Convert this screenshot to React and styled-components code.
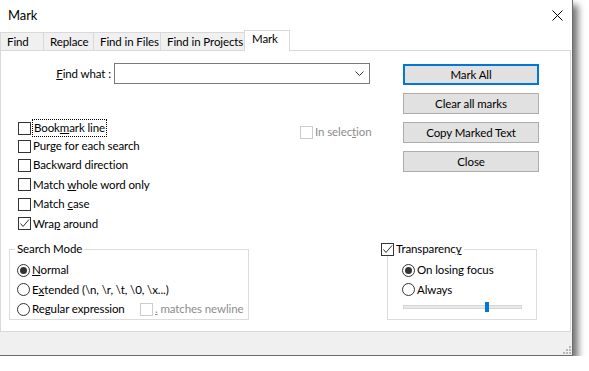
import React from "react";
import styled, { createGlobalStyle } from "styled-components";

const GlobalStyle = createGlobalStyle`
  body {
    margin: 0;
    background: #fff;
    font-family: Lato, "Liberation Sans", sans-serif;
    font-size: 11.5px;
    letter-spacing: -0.1px;
    color: #000;
  }
  u {
    text-underline-offset: 1px;
  }
`;

const Window = styled.div`
  width: 573px;
  height: 356px;
  box-sizing: border-box;
  background: #fff;
  border-right: 1px solid #6b6b6b;
  border-bottom: 1px solid #6b6b6b;
  box-shadow: 5px 5px 7px rgba(0, 0, 0, 0.55);
  display: flex;
  flex-direction: column;
`;

const TitleBar = styled.div`
  height: 30px;
  display: flex;
  align-items: center;
  justify-content: space-between;
  padding: 0 9px 0 8px;
  font-size: 13px;
  flex: none;
`;

const TabStrip = styled.div`
  height: 20px;
  display: flex;
  align-items: flex-end;
  flex: none;
`;

const Tab = styled.div`
  box-sizing: border-box;
  width: ${(p) => p.$w}px;
  height: ${(p) => (p.$active ? 21 : 18)}px;
  margin-right: -1px;
  margin-bottom: ${(p) => (p.$active ? -1 : 0)}px;
  border: 1px solid #d9d9d9;
  border-bottom: none;
  background: ${(p) => (p.$active ? "#fff" : "#f0f0f0")};
  position: relative;
  z-index: ${(p) => (p.$active ? 1 : 0)};
  padding: ${(p) => (p.$active ? "1px 0 0 7px" : "2px 0 0 6px")};
  line-height: 14px;
  white-space: nowrap;
`;

const Panel = styled.div`
  box-sizing: border-box;
  width: 571px;
  height: 282px;
  border: 1px solid #d9d9d9;
  display: flex;
  flex-direction: column;
  flex: none;
`;

const TopArea = styled.div`
  display: flex;
`;

const LeftCol = styled.div`
  width: 390px;
  padding: 12px 0 0 17px;
  box-sizing: border-box;
`;

const FindRow = styled.div`
  display: flex;
  align-items: center;
  height: 21px;
`;

const FindLabel = styled.div`
  width: 96px;
  box-sizing: border-box;
  text-align: right;
  padding-right: 3px;
`;

const Combo = styled.div`
  box-sizing: border-box;
  width: 256px;
  height: 21px;
  border: 1px solid #7a7a7a;
  display: flex;
  align-items: center;
  justify-content: flex-end;
  padding-right: 5px;
`;

const CheckList = styled.div`
  margin-top: 33px;
  display: flex;
  flex-direction: column;
`;

const CheckRow = styled.div`
  height: 19.4px;
  display: grid;
  grid-template-columns: 282px auto;
  align-items: center;
`;

const Item = styled.div`
  display: flex;
  align-items: center;
  gap: 2px;
  color: ${(p) => (p.$disabled ? "#8d8d8d" : "#000")};
  margin-top: ${(p) => p.$drop || 0}px;
  white-space: nowrap;
  line-height: 14px;
`;

const Box = styled.span`
  box-sizing: border-box;
  width: 13px;
  height: 13px;
  border: 1px solid ${(p) => (p.$disabled ? "#cccccc" : "#333")};
  background: #fff;
  flex: none;
  display: flex;
  align-items: center;
  justify-content: center;
`;

const Circle = styled.span`
  box-sizing: border-box;
  width: 13px;
  height: 13px;
  border-radius: 50%;
  border: 1px solid #333;
  background: #fff;
  flex: none;
  display: flex;
  align-items: center;
  justify-content: center;
  &::after {
    content: "";
    display: ${(p) => (p.$checked ? "block" : "none")};
    width: 7px;
    height: 7px;
    border-radius: 50%;
    background: #333;
  }
`;

const Focus = styled.span`
  outline: 1px dotted #000;
  outline-offset: 0;
  padding: 1px 1px;
`;

const ButtonCol = styled.div`
  margin-left: 12px;
  padding-top: 13px;
  display: flex;
  flex-direction: column;
  gap: 8px;
`;

const Button = styled.div`
  box-sizing: border-box;
  width: 136px;
  height: 21px;
  background: #e1e1e1;
  border: ${(p) => (p.$default ? "2px solid #0078d7" : "1px solid #adadad")};
  display: flex;
  align-items: center;
  justify-content: center;
`;

const BottomRow = styled.div`
  margin-top: 9px;
  display: flex;
`;

const Group = styled.fieldset`
  box-sizing: border-box;
  margin: 0 0 0 ${(p) => p.$left}px;
  padding: 0;
  width: ${(p) => p.$w}px;
  height: 78px;
  min-inline-size: 0;
  border: 1px solid #dcdcdc;
`;

const Legend = styled.legend`
  padding: ${(p) => p.$pad};
  margin-left: ${(p) => p.$shift}px;
  line-height: 14px;
  height: 14px;
`;

const GroupBody = styled.div`
  padding: 4px 0 0 ${(p) => p.$inset}px;
  display: flex;
  flex-direction: column;
`;

const RadioRow = styled.div`
  height: 19.5px;
  display: flex;
  align-items: center;
`;

const SplitRow = styled(RadioRow)`
  display: grid;
  grid-template-columns: 123px auto;
`;

const SliderRow = styled.div`
  margin-top: 6px;
  padding-left: 1px;
`;

const Track = styled.div`
  position: relative;
  box-sizing: border-box;
  width: 119px;
  height: 4px;
  background: #e7eaea;
  border: 1px solid #d6d6d6;
`;

const Thumb = styled.div`
  position: absolute;
  left: 81px;
  top: -4px;
  width: 4px;
  height: 10px;
  background: #0078d7;
`;

const Footer = styled.div`
  flex: 1;
  background: #f0f0f0;
  display: flex;
  align-items: flex-end;
  justify-content: flex-end;
  padding: 0 1px 1px 0;
`;

function CloseIcon() {
  return (
    <svg width="11" height="11" viewBox="0 0 11 11">
      <path d="M0.5 0.5 L10.5 10.5 M10.5 0.5 L0.5 10.5" stroke="#000" strokeWidth="1" fill="none" />
    </svg>
  );
}

function Chevron() {
  return (
    <svg width="9" height="5" viewBox="0 0 9 5">
      <polyline points="0.5,0.5 4.5,4.5 8.5,0.5" stroke="#333" strokeWidth="1" fill="none" />
    </svg>
  );
}

function Tick() {
  return (
    <svg width="11" height="11" viewBox="0 0 11 11">
      <polyline points="1.5,5.5 4,8.5 10,1.5" stroke="#333" strokeWidth="1" fill="none" />
    </svg>
  );
}

function Grip() {
  const dots = [
    [6, 0],
    [3, 3],
    [6, 3],
    [0, 6],
    [3, 6],
    [6, 6],
  ];
  return (
    <svg width="8" height="8" viewBox="0 0 8 8">
      {dots.map(([x, y]) => (
        <rect key={`${x}-${y}`} x={x} y={y} width="2" height="2" fill="#b8b8b8" />
      ))}
    </svg>
  );
}

function Check({ checked, disabled, drop, children }) {
  return (
    <Item $disabled={disabled} $drop={drop}>
      <Box $disabled={disabled}>{checked && <Tick />}</Box>
      <span>{children}</span>
    </Item>
  );
}

function Radio({ checked, children }) {
  return (
    <Item>
      <Circle $checked={checked} />
      <span>{children}</span>
    </Item>
  );
}

const tabs = [
  { label: "Find", w: 44 },
  { label: "Replace", w: 51 },
  { label: "Find in Files", w: 68 },
  { label: "Find in Projects", w: 85 },
  { label: "Mark", w: 46, active: true },
];

export default function App() {
  return (
    <>
      <GlobalStyle />
      <Window>
        <TitleBar>
          <span>Mark</span>
          <CloseIcon />
        </TitleBar>
        <TabStrip>
          {tabs.map((t) => (
            <Tab key={t.label} $w={t.w} $active={t.active}>
              {t.label}
            </Tab>
          ))}
        </TabStrip>
        <Panel>
          <TopArea>
            <LeftCol>
              <FindRow>
                <FindLabel>
                  <u>F</u>ind what :
                </FindLabel>
                <Combo>
                  <Chevron />
                </Combo>
              </FindRow>
              <CheckList>
                <CheckRow>
                  <Item>
                    <Box />
                    <Focus>
                      Book<u>m</u>ark line
                    </Focus>
                  </Item>
                  <Check disabled drop={8}>
                    In selec<u>t</u>ion
                  </Check>
                </CheckRow>
                <CheckRow>
                  <Check>Purge for each search</Check>
                </CheckRow>
                <CheckRow>
                  <Check>Backward direction</Check>
                </CheckRow>
                <CheckRow>
                  <Check>
                    Match <u>w</u>hole word only
                  </Check>
                </CheckRow>
                <CheckRow>
                  <Check>
                    Match <u>c</u>ase
                  </Check>
                </CheckRow>
                <CheckRow>
                  <Check checked>
                    Wra<u>p</u> around
                  </Check>
                </CheckRow>
              </CheckList>
            </LeftCol>
            <ButtonCol>
              <Button $default>Mark All</Button>
              <Button>Clear all marks</Button>
              <Button>Copy Marked Text</Button>
              <Button>Close</Button>
            </ButtonCol>
          </TopArea>
          <BottomRow>
            <Group $left={8} $w={240}>
              <Legend $shift={5} $pad="0 2px">
                Search Mode
              </Legend>
              <GroupBody $inset={7}>
                <RadioRow>
                  <Radio checked>
                    <u>N</u>ormal
                  </Radio>
                </RadioRow>
                <RadioRow>
                  <Radio>
                    E<u>x</u>tended (\n, \r, \t, \0, \x...)
                  </Radio>
                </RadioRow>
                <SplitRow>
                  <Radio>
                    Re<u>g</u>ular expression
                  </Radio>
                  <Check disabled>
                    <u>.</u> matches newline
                  </Check>
                </SplitRow>
              </GroupBody>
            </Group>
            <Group $left={138} $w={150}>
              <Legend $shift={-7} $pad="0 2px 0 0">
                <Check checked>
                  Transparenc<u>y</u>
                </Check>
              </Legend>
              <GroupBody $inset={14}>
                <RadioRow>
                  <Radio checked>On losing focus</Radio>
                </RadioRow>
                <RadioRow>
                  <Radio>Always</Radio>
                </RadioRow>
                <SliderRow>
                  <Track>
                    <Thumb />
                  </Track>
                </SliderRow>
              </GroupBody>
            </Group>
          </BottomRow>
        </Panel>
        <Footer>
          <Grip />
        </Footer>
      </Window>
    </>
  );
}
